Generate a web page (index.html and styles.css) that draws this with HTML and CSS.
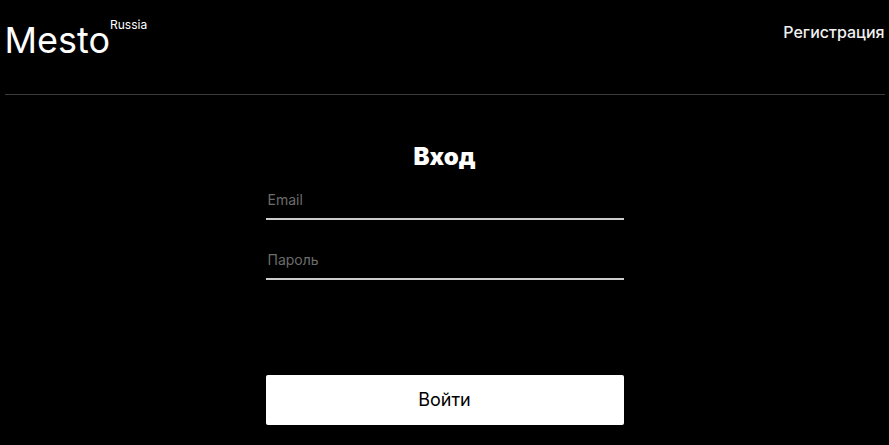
FILE: index.html
```html
<!DOCTYPE html>
<html lang="ru">
<head>
<meta charset="utf-8">
<meta name="viewport" content="width=device-width, initial-scale=1">
<title>Mesto</title>
<link rel="stylesheet" href="styles.css">
</head>
<body>
<div class="page">
  <header class="header">
    <a class="logo" href="#"><span class="logo__name">Mesto</span><span class="logo__region">Russia</span></a>
    <a class="header__link" href="#">Регистрация</a>
  </header>
  <main>
    <form class="login">
      <h1 class="login__title">Вход</h1>
      <input class="login__input" type="email" placeholder="Email" aria-label="Email">
      <input class="login__input" type="password" placeholder="Пароль" aria-label="Пароль">
      <button class="login__button" type="submit">Войти</button>
    </form>
  </main>
</div>
</body>
</html>
```
FILE: styles.css
```css
* {
  box-sizing: border-box;
}

body {
  margin: 0;
  background: #000;
  color: #fff;
  font-family: Inter, "Liberation Sans", sans-serif;
}

.page {
  max-width: 880px;
  margin: 0 auto;
}

.header {
  display: flex;
  justify-content: space-between;
  align-items: flex-start;
  padding: 18px 0 32px;
  border-bottom: 1px solid rgba(84, 84, 84, 0.7);
}

.logo {
  display: flex;
  align-items: flex-start;
  color: #fff;
  text-decoration: none;
}

.logo__name {
  font-size: 36px;
  line-height: 44px;
}

.logo__region {
  font-size: 12px;
  line-height: 14px;
}

.header__link {
  color: #f0f0f0;
  font-size: 16px;
  font-weight: 500;
  line-height: 28px;
  text-decoration: none;
}

.login {
  display: flex;
  flex-direction: column;
  width: 100%;
  max-width: 358px;
  margin: 0 auto;
  padding: 46px 0 20px;
}

.login__title {
  margin: 0 0 10px;
  font-size: 24px;
  font-weight: 900;
  line-height: 32px;
  text-align: center;
}

.login__input {
  width: 100%;
  height: 37px;
  margin-bottom: 23px;
  padding: 0 2px 2px;
  border: 0;
  border-bottom: 2px solid #ccc;
  border-radius: 0;
  background: transparent;
  color: #fff;
  font: 14px/17px Inter, "Liberation Sans", sans-serif;
}

.login__input::placeholder {
  color: #6c6c6c;
}

.login__button {
  height: 50px;
  margin-top: 72px;
  border: 0;
  border-radius: 2px;
  background: #fff;
  color: #000;
  font: 18px/22px Inter, "Liberation Sans", sans-serif;
}
```
